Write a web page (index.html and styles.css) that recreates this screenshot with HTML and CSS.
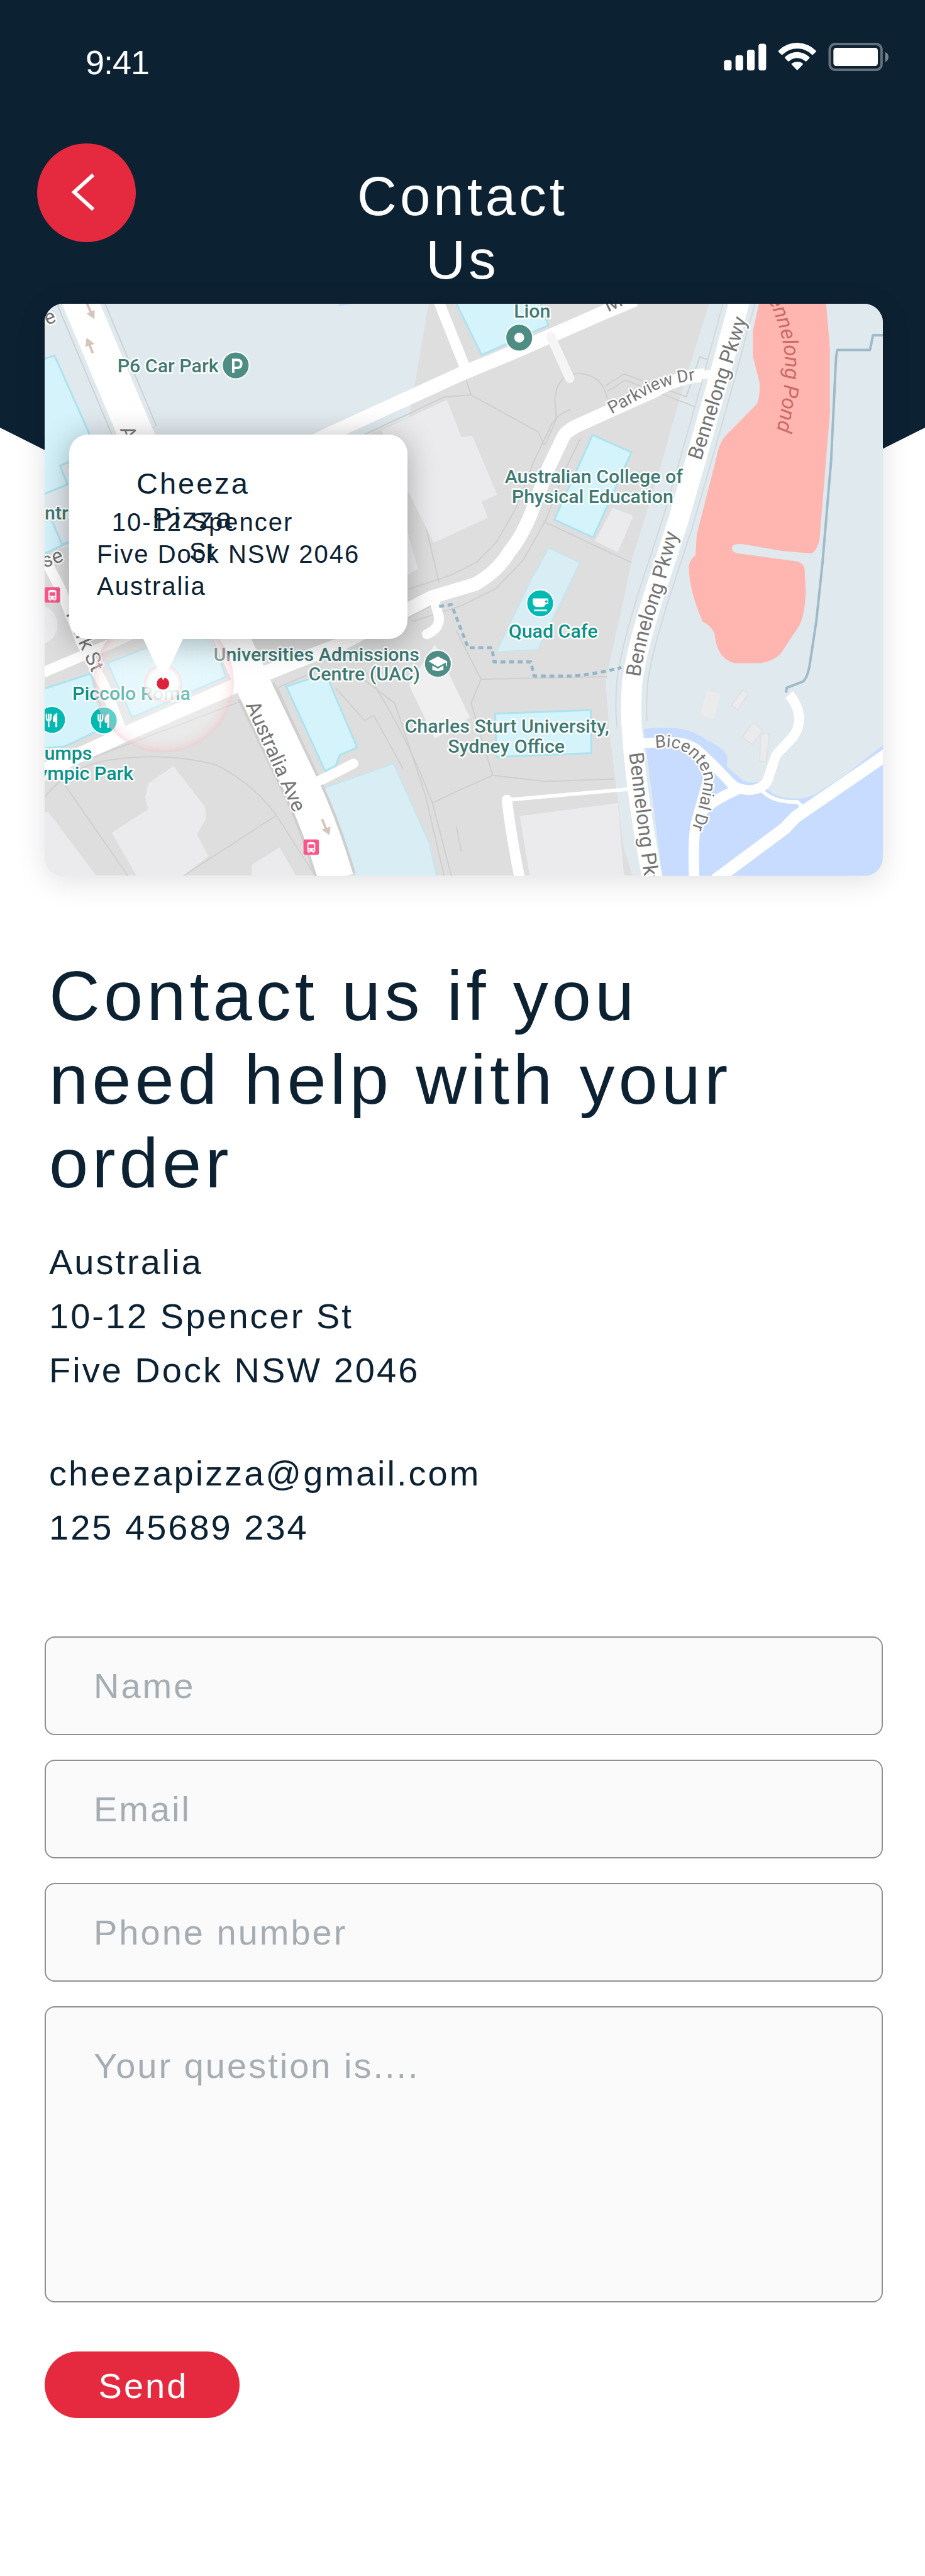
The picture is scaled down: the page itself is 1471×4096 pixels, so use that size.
FILE: index.html
```html
<!DOCTYPE html>
<html lang="en">
<head>
<meta charset="utf-8">
<meta name="viewport" content="width=device-width, initial-scale=1">
<title>Contact Us</title>
<link rel="stylesheet" href="styles.css">
</head>
<body>
<div class="page">
  <div class="status">
    <span class="status-time">9:41</span>
    <svg class="status-icons" viewBox="73 87 801 137" aria-hidden="true">
      <g fill="#fff">
        <rect x="74" y="171" width="37" height="50" rx="12"/>
        <rect x="130" y="147" width="37" height="74" rx="12"/>
        <rect x="186" y="120" width="37" height="101" rx="12"/>
        <rect x="242" y="91" width="37" height="130" rx="12"/>
        <path d="M340 124 Q379 87 430 87 Q481 87 520 124 Q524 128 520 132 L508 143 Q504 147 500 143 Q470 115 430 115 Q390 115 360 143 Q356 147 352 143 L340 132 Q336 128 340 124Z"/>
        <path d="M372 155 Q397 132 430 132 Q463 132 488 155 Q492 159 488 163 L476 175 Q472 179 468 175 Q452 161 430 161 Q408 161 392 175 Q388 179 384 175 L372 163 Q368 159 372 155Z"/>
        <path d="M404 187 Q415 179 430 179 Q445 179 456 187 Q460 190 456 194 L434 217 Q430 221 426 217 L404 194 Q400 190 404 187Z"/>
        <rect x="606" y="111" width="216" height="89" rx="14"/>
      </g>
      <rect x="588" y="93" width="252" height="125" rx="27" fill="none" stroke="#66717c" stroke-width="12"/>
      <path d="M858 132 Q874 140 874 156 Q874 172 858 180Z" fill="#7a848d"/>
    </svg>
  </div>

  <header class="top">
    <button class="back" type="button" aria-label="Back">
      <svg viewBox="0 0 160 160" aria-hidden="true"><path d="M91 51 L60 79 L91 107" fill="none" stroke="#fff" stroke-width="6"/></svg>
    </button>
    <h1 class="title">Contact Us</h1>
  </header>

  <main>
    <section class="map">
      <svg class="map-art" viewBox="72 492 1360 928" role="img" aria-label="Map of the area around the shop">
        <defs>
          <radialGradient id="halo">
            <stop offset="0" stop-color="#fff" stop-opacity=".5"/>
            <stop offset=".8" stop-color="#fff" stop-opacity=".35"/>
            <stop offset=".92" stop-color="#fbe6e8" stop-opacity=".4"/>
            <stop offset="1" stop-color="#f6c3c9" stop-opacity=".5"/>
          </radialGradient>
          <radialGradient id="glow">
            <stop offset="0" stop-color="#fff" stop-opacity=".95"/>
            <stop offset=".75" stop-color="#fff" stop-opacity=".75"/>
            <stop offset="1" stop-color="#f9dcdf" stop-opacity=".7"/>
          </radialGradient>
          <path id="lbl-parkview" d="M992 671 L1060 634 Q1092 618 1150 614"/>
          <path id="lbl-bennelong" d="M1038 1098 Q1048 1030 1074 960 L1112 820"/>
          <path id="lbl-pond" d="M1236 466 Q1270 530 1273 580 Q1276 640 1252 730"/>
          <path id="lbl-bicentennial" d="M1063 1213 Q1103 1206 1125 1231 Q1142 1250 1142 1268 Q1138 1295 1122 1345"/>
          <g id="fork" fill="none" stroke="#fff">
            <path d="M-9 -10 V-3 Q-9 1 -5.500 1 Q-2 1 -2 -3 V-10 M-5.500 -10 V12" stroke-width="2.500"/>
            <path d="M7 12 V-9 Q2 -6 3 2 H7" fill="#fff" stroke-width="3"/>
          </g>
          <g id="bus">
            <rect width="25" height="25" rx="3" fill="#fb568c"/>
            <path d="M6 20 V7 Q6 4 12.500 4 Q19 4 19 7 V20 H17 V22 H15 V20 H10 V22 H8 V20Z" fill="#fff"/>
            <path d="M8 8 H17 V14 H8Z M8 16 H10 V18 H8Z M15 16 H17 V18 H15Z" fill="#fb568c"/>
          </g>
        </defs>

        <rect x="72" y="492" width="1360" height="928" fill="#dedede"/>

        <!-- ground areas -->
        <path fill="#e0e9ee" d="M72 492H695L664 675 593 706 400 800 112 885 72 897Z"/>
        <path fill="#e0e9ee" d="M1150 492 1103 643 1074 747 1024 910 1014 960 990 1067 982 1107 990 1200 1011 1373 1026 1420H1432V492Z"/>
        <path fill="#c8dcff" d="M1044 1182Q1075 1178 1099 1181 1125 1184 1147 1200 1179 1215 1180 1230L1179 1243 1205 1265Q1217 1270 1230 1268L1254 1287Q1290 1302 1322 1288L1370 1257 1432 1208V1420H1074Z"/>
        <path fill="#c8dcff" d="M549 492H575L549 496Z"/>
        <path fill="#ffb6b0" d="M1231 492H1340L1346 563V670L1329 877Q1322 898 1314 897L1268 893 1205 882Q1187 880 1187 889 1188 896 1198 897L1293 910Q1304 914 1305 922L1307 960 1305 983Q1303 1000 1297 1013L1266 1060Q1254 1072 1234 1075H1191Q1178 1072 1169 1060 1160 1045 1159 1027 1153 1014 1140 1008 1118 960 1117 917 1120 905 1128 900L1130 867 1165 729Q1168 717 1176 707L1225 657Q1233 650 1232 620L1221 577V537Z"/>

        <!-- lot lines -->
        <g fill="none" stroke="#cfcfcf" stroke-width="2">
          <path stroke-width="54" d="M934 688Q918 694 914 707L890 757 861 833 827 893 788 933 740 957 660 983"/>
          <path stroke="#dedede" stroke-width="50" d="M934 688Q918 694 914 707L890 757 861 833 827 893 788 933 740 957 660 983"/>
          <path d="M591 704 721 643 764 640 873 700 883 722M755 613 764 640M883 722 902 680 900 647Q902 606 940 605 978 608 985 647M881 845 1024 912M982 625 1012 606 1113 643 1135 578 1154 585M985 634 1014 616 1130 660"/>
          <path d="M740 1023 780 1101 985 1097M780 1101 764 1140 799 1257 885 1267 995 1263M799 1257 740 1283 701 1302M589 1083Q660 1190 701 1302L732 1420M544 1115 591 1168 606 1160 654 1247M575 1090 640 1140 690 1290 720 1420M145 1230 388 1138M105 1273 207 1420M448 1322 297 1420"/>
          <path d="M72 1292Q110 1245 172 1233 270 1218 350 1240 410 1270 448 1322L511 1420M450 1115 515 1262M450 1115 520 1085"/>
          <path d="M678 800 712 945M660 1002 712 975M748 1380 740 1340"/>
        </g>

        <!-- buildings -->
        <g fill="#ebebed">
          <path d="M725 648 748 708 766 706 806 802 781 813 791 839 703 880 660 793 618 697Z"/>
          <path d="M660 860 678 922 660 932Z"/>
          <path d="M994 823 1027 836 1002 895 965 877Z"/>
          <path d="M281 1242 332 1308 334 1327 319 1353 338 1388 297 1420H221L181 1350 240 1312 235 1293 240 1270Z"/>
          <path d="M72 1317H78L156 1420H72Z"/>
          <path d="M453 1374 480 1420H408V1402Z"/>
          <circle cx="61" cy="1013" r="32"/>
          <path d="M843 1323 1002 1302 1012 1420H859Z"/>
          <path fill="#efefef" d="M705 1045 740 1117 762 1163 705 1198 663 1110Z"/>
          <path d="M1147 1119 1169 1125 1158 1165 1135 1158Z"/>
          <path stroke="#dfe2e4" stroke-width="2" d="M1205 1118 1214 1124 1196 1151 1186 1143ZM1222 1171 1237 1185 1220 1207 1204 1195ZM1234 1189 1248 1190 1243 1235 1232 1234Z"/>
        </g>
        <g fill="#d5f3fb" stroke="#ace3ef" stroke-width="3">
          <path d="M70 582 88 576 145 704 152 732 112 748 97 755 109 785 70 801Z"/>
          <path d="M70 845 83 842 100 882 118 876 70 898Z"/>
          <path d="M739 490 781 575 889 527 876 490Z"/>
          <path d="M961 705 1024 733 962 871 899 842Z"/>
          <path d="M803 1157 958 1151 959 1221 805 1227Z"/>
          <path d="M464 1113 528 1092 579 1212 551 1224 544 1242 527 1250Z"/>
          <path d="M174 1075 337 1010 366 1097 214 1163Z"/>
          <path d="M70 1117 147 1092 172 1178 105 1210 70 1213Z"/>
        </g>
        <g fill="#d8eef4" stroke="#c5e6ee" stroke-width="2">
          <path d="M890 888 940 912 927 940 872 1053 805 1057 861 940Z"/>
          <path d="M522 1279 638 1238 696 1367 708 1422H577Z"/>
        </g>

        <!-- roads -->
        <g fill="none" stroke-linejoin="round">
          <g stroke="#fff">
            <path stroke-width="22" d="M1152 608Q1108 606 1060 634L982 669 940 688Q920 697 914 707L890 757 861 833Q846 870 827 893 806 928 770 947L700 968 551 1045 430 1090"/>
            <path stroke-width="23" d="M1030 485 982 505 827 573 747 606 533 704 480 730"/>
            <path stroke-width="17" d="M708 480 756 600"/>
            <path stroke-width="16" stroke-linecap="round" d="M705 975 712 1002Q712 1020 692 1028"/>
            <path stroke-width="16" stroke-linecap="round" d="M510 1270 573 1238"/>
            <path stroke-width="17" d="M70 1090 183 1042 260 1005M72 905 98 955 131 1040 169 1113 197 1185"/>
            <path stroke-width="24" d="M390 1108 203 1190 60 1255"/>
            <path stroke-width="15" stroke="#f5f5f5" stroke-linecap="round" d="M893 545 924 613"/>
          </g>
          <path stroke="#cdd2d5" stroke-width="74" d="M118 460 131 492 220 704"/>
          <path stroke="#e0e9ee" stroke-width="70" d="M118 460 131 492 220 704"/>
          <path stroke="#cfcfcf" stroke-width="66" d="M415 1120 488 1273 Q520 1340 545 1425"/>
          <path stroke="#fff" stroke-width="57" d="M118 460 131 492 220 704 376 1036 415 1120 488 1273Q520 1340 545 1425"/>
          <path stroke="#fff" stroke-width="22" d="M551 1045 420 1097M390 1108 360 1121"/>
          <path stroke="#fff" stroke-width="16" d="M500 1274 540 1255"/>
          <path stroke="#d3d9dc" stroke-width="52" d="M1207 460 1162 627 1128 747 1099 847 1062 960 Q1030 1060 1025 1110 Q1022 1160 1026 1175"/>
          <path stroke="#e0e9ee" stroke-width="48" d="M1207 460 1162 627 1128 747 1099 847 1062 960 Q1030 1060 1025 1110 Q1022 1160 1026 1178"/>
          <path stroke="#fff" stroke-width="33" d="M1207 460 1162 627 1128 747 1099 847 1062 960Q1030 1060 1025 1110 1022 1160 1026 1193 1028 1240 1043 1340L1058 1425"/>
          <path stroke="#fff" stroke-width="14" d="M1110 607H1155"/>
          <g stroke="#fff">
            <path stroke-width="16" d="M1040 1205 1085 1203Q1112 1202 1130 1215L1155 1238 1181 1265Q1192 1280 1214 1281 1240 1280 1246 1262L1255 1235Q1257 1224 1266 1216L1285 1196Q1297 1180 1296 1165 1296 1145 1280 1126"/>
            <path stroke-width="17" d="M1118 1212Q1148 1235 1149 1263L1131 1327Q1123 1350 1126 1425M1133 1322Q1150 1300 1200 1278"/>
            <path stroke-width="20" d="M1160 1427 1273 1343 1290 1325 1440 1222"/>
            <path stroke-width="6" d="M1234 1280Q1254 1302 1293 1300L1305 1312M1024 1279 822 1297"/>
            <path stroke-width="17" stroke-linecap="round" d="M822 1297Q828 1350 843 1425"/>
          </g>
          <path stroke="#9fbac8" stroke-width="4" d="M1434 543H1416L1411 567H1358L1356 580 1348 747 1334 913 1324 1007 1314 1073Q1310 1100 1302 1105L1276 1115 1275 1123"/>
          <path stroke="#93b6c9" stroke-width="5" stroke-dasharray="8 6" d="M712 983 732 980 759 1050H798L801 1073H861L866 1096H930Q970 1092 1008 1082"/>
        </g>

        <!-- one-way arrows -->
        <g fill="none" stroke="#d6c5bd" stroke-width="4">
          <path d="M140 490 148 508M150 572 143 554M522 1328 530 1347"/>
          <path fill="#d6c5bd" stroke="none" d="M140 508 153 502 153 517ZM138 562 140 547 153 557ZM521 1345 536 1340 534 1354Z"/>
        </g>

        <!-- street names -->
        <g class="street">
          <text transform="translate(1137 747) rotate(-72)">Bennelong Pkwy</text>
          <text><textPath href="#lbl-bennelong">Bennelong Pkwy</textPath></text>
          <text transform="translate(1020 1221) rotate(83)">Bennelong Pkwy</text>
          <text class="small"><textPath href="#lbl-parkview">Parkview Dr</textPath></text>
          <text class="small"><textPath href="#lbl-bicentennial">Bicentennial Dr</textPath></text>
          <text transform="translate(398 1143) rotate(66)">Australia Ave</text>
          <text transform="translate(194 695) rotate(70)">Aus</text>
          <text transform="translate(106 995) rotate(66)">Park St</text>
          <text transform="translate(986 506) rotate(-25)">M</text>
          <text text-anchor="end" transform="translate(104 909) rotate(-20)">se</text>
          <text text-anchor="end" transform="translate(92 521) rotate(-20)">re</text>
        </g>
        <text class="pond"><textPath href="#lbl-pond">Bennelong Pond</textPath></text>

        <!-- places -->
        <g class="place">
          <text x="190" y="603">P6 Car Park</text>
          <text x="863" y="514" text-anchor="middle">Lion</text>
          <text x="963" y="783" text-anchor="middle">Australian College of</text>
          <text x="961" y="815" text-anchor="middle">Physical Education</text>
          <text x="680" y="1072" text-anchor="end">Universities Admissions</text>
          <text x="681" y="1103" text-anchor="end">Centre (UAC)</text>
          <text x="822" y="1188" text-anchor="middle">Charles Sturt University,</text>
          <text x="821" y="1220" text-anchor="middle">Sydney Office</text>
          <text x="72" y="842">ntre</text>
        </g>
        <g class="place food">
          <text x="897" y="1034" text-anchor="middle">Quad Cafe</text>
          <text x="117" y="1135">Piccolo Roma</text>
          <text x="149" y="1232" text-anchor="end">umps</text>
          <text x="216" y="1264" text-anchor="end">ympic Park</text>
        </g>

        <!-- markers -->
        <g stroke="#fff" stroke-width="2">
          <circle cx="382" cy="592" r="22" fill="#4e8d84"/>
          <circle cx="842" cy="547" r="22" fill="#4e8d84"/>
          <circle cx="710" cy="1076" r="22" fill="#4e8d84"/>
          <circle cx="876" cy="978" r="22" fill="#00b9b2"/>
          <circle cx="168" cy="1168" r="22" fill="#00b9b2"/>
          <circle cx="84" cy="1167" r="22" fill="#00b9b2"/>
        </g>
        <path d="M378 604V583H384Q391 583 391 589.500 391 596 384 596H378" fill="none" stroke="#fff" stroke-width="4"/>
        <circle cx="842" cy="547" r="8" fill="#fff"/>
        <path d="M710 1064 725 1072V1080H723V1074L710 1081 695 1072ZM701 1079 710 1084 719 1079V1086L710 1088 701 1086Z" fill="#fff"/>
        <path d="M864 970H889V979H885Q884 984 879 984H871Q864 983 864 976ZM866 988H887V991H866Z" fill="#fff"/>
        <circle cx="886" cy="975" r="2" fill="#00b9b2"/>
        <use href="#fork" x="168" y="1168"/>
        <use href="#fork" x="84" y="1167"/>
        <use href="#bus" x="492" y="1361"/>
        <use href="#bus" x="72" y="952"/>

        <!-- shop pin -->
        <circle cx="265" cy="1106" r="114" fill="url(#halo)"/>
        <circle cx="264" cy="1108" r="31" fill="url(#glow)"/>
        <circle cx="264" cy="1108" r="10" fill="#dd2239"/>
      </svg>

      <div class="callout">
        <h2 class="callout-name">Cheeza Pizza</h2>
        <p class="callout-street">10-12 Spencer St</p>
        <p class="callout-city">Five Dock NSW 2046<br>Australia</p>
      </div>
    </section>

    <section class="details">
      <h2 class="lead">Contact us if you need help with your order</h2>
      <address class="lines">Australia<br>10-12 Spencer St<br>Five Dock NSW 2046</address>
      <div class="lines">
        <a href="mailto:cheezapizza@gmail.com">cheezapizza@gmail.com</a><br>
        <a href="tel:12545689234">125 45689 234</a>
      </div>
    </section>

    <form class="form">
      <input class="field" type="text" name="name" placeholder="Name" aria-label="Name">
      <input class="field" type="email" name="email" placeholder="Email" aria-label="Email">
      <input class="field" type="tel" name="phone" placeholder="Phone number" aria-label="Phone number">
      <textarea class="field question" name="question" placeholder="Your question is...." aria-label="Your question"></textarea>
      <button class="send" type="submit">Send</button>
    </form>
  </main>
</div>
</body>
</html>
```

FILE: styles.css
```css
* {
  box-sizing: border-box;
}

body {
  margin: 0;
  background: #fff;
  color: #0c2132;
  font-family: "Liberation Sans", Arial, Helvetica, sans-serif;
  font-size: 56px;
  letter-spacing: 3px;
}

h1,
h2,
p {
  margin: 0;
  font-weight: 400;
}

.page {
  position: relative;
  padding-bottom: 250px;
  overflow: hidden;
}

/* dark backdrop that narrows to a point behind the map */
.page::before {
  content: "";
  position: absolute;
  inset: 0 0 auto;
  z-index: -1;
  height: 1048px;
  background: #0c2132;
  clip-path: polygon(0 0, 100% 0, 100% 680px, 50% 100%, 0 680px);
}

.status {
  display: flex;
  justify-content: space-between;
  align-items: flex-start;
  padding: 68px 58px 0 136px;
  color: #fff;
}

.status-time {
  font-size: 54px;
  line-height: 62px;
  letter-spacing: -1px;
}

.status-icons {
  width: 262px;
  height: 45px;
}

.top {
  display: grid;
  grid-template-columns: 157px 1fr 157px;
  align-items: start;
  padding: 98px 59px 0;
}

.back {
  width: 157px;
  height: 157px;
  padding: 0;
  border: 0;
  border-radius: 50%;
  background: #e5293e;
}

.back svg {
  display: block;
  width: 100%;
}

.title {
  justify-self: center;
  max-width: 400px;
  padding-top: 33px;
  color: #fff;
  font-size: 87px;
  line-height: 101px;
  letter-spacing: 5px;
  text-align: center;
}

.map {
  position: relative;
  margin: 20px 67px 0 71px;
  border-radius: 30px;
  box-shadow: 0 8px 48px rgba(0, 0, 0, 0.12);
}

.map-art {
  display: block;
  width: 100%;
  border-radius: 30px;
  font-family: Roboto, sans-serif;
  letter-spacing: 0;
}

.place,
.street {
  paint-order: stroke;
  stroke: #fff;
  stroke-width: 5px;
  stroke-linejoin: round;
}

.place {
  fill: #3f7a73;
  font-size: 31px;
  font-weight: 500;
}

.food {
  fill: #0b9289;
}

.street {
  fill: #757575;
  font-size: 33px;
}

.street .small {
  font-size: 28px;
}

.pond {
  fill: #cb6a67;
  font-size: 34px;
  font-style: italic;
}

.callout {
  position: absolute;
  top: 208px;
  left: 39px;
  width: 538px;
  height: 325px;
  border-radius: 30px;
  background: #fff;
  box-shadow: 0 6px 48px rgba(0, 0, 0, 0.3);
  font-size: 40px;
  line-height: 51px;
  letter-spacing: 2px;
}

.callout::after {
  content: "";
  position: absolute;
  top: 100%;
  left: 118px;
  width: 63px;
  height: 66px;
  background: #fff;
  clip-path: polygon(0 0, 100% 0, 50% 100%);
}

.callout-name,
.callout-street,
.callout-city {
  position: absolute;
}

.callout-name {
  top: 50px;
  left: 87px;
  width: 220px;
  font-size: 47px;
  line-height: 55px;
  letter-spacing: 3px;
  text-align: center;
}

.callout-street {
  top: 116px;
  left: 62px;
  width: 300px;
  line-height: 47px;
  text-align: center;
}

.callout-city {
  top: 165px;
  left: 44px;
  white-space: nowrap;
}

.details {
  padding: 124px 78px 0;
}

.lead {
  max-width: 1150px;
  font-size: 112px;
  line-height: 133px;
  letter-spacing: 6px;
}

.lines {
  margin-top: 48px;
  font-style: normal;
  line-height: 86px;
}

.lines + .lines {
  margin-top: 78px;
}

.lines a {
  color: inherit;
  text-decoration: none;
}

.form {
  display: flex;
  flex-direction: column;
  gap: 39px;
  padding: 130px 67px 0 71px;
}

.field {
  display: block;
  width: 100%;
  height: 157px;
  margin: 0;
  padding: 0 76px;
  border: 2px solid #8e9092;
  border-radius: 16px;
  background: #fafafa;
  color: #0c2132;
  font: inherit;
  letter-spacing: inherit;
}

.field::placeholder {
  color: #a5adb3;
  opacity: 1;
}

.question {
  height: 471px;
  padding-top: 60px;
  line-height: 66px;
  resize: none;
}

.send {
  align-self: flex-start;
  width: 310px;
  height: 106px;
  margin-top: 39px;
  padding: 4px 0 0 4px;
  border: 0;
  border-radius: 53px;
  background: #e5293e;
  color: #fff;
  font: inherit;
  letter-spacing: inherit;
}
```
